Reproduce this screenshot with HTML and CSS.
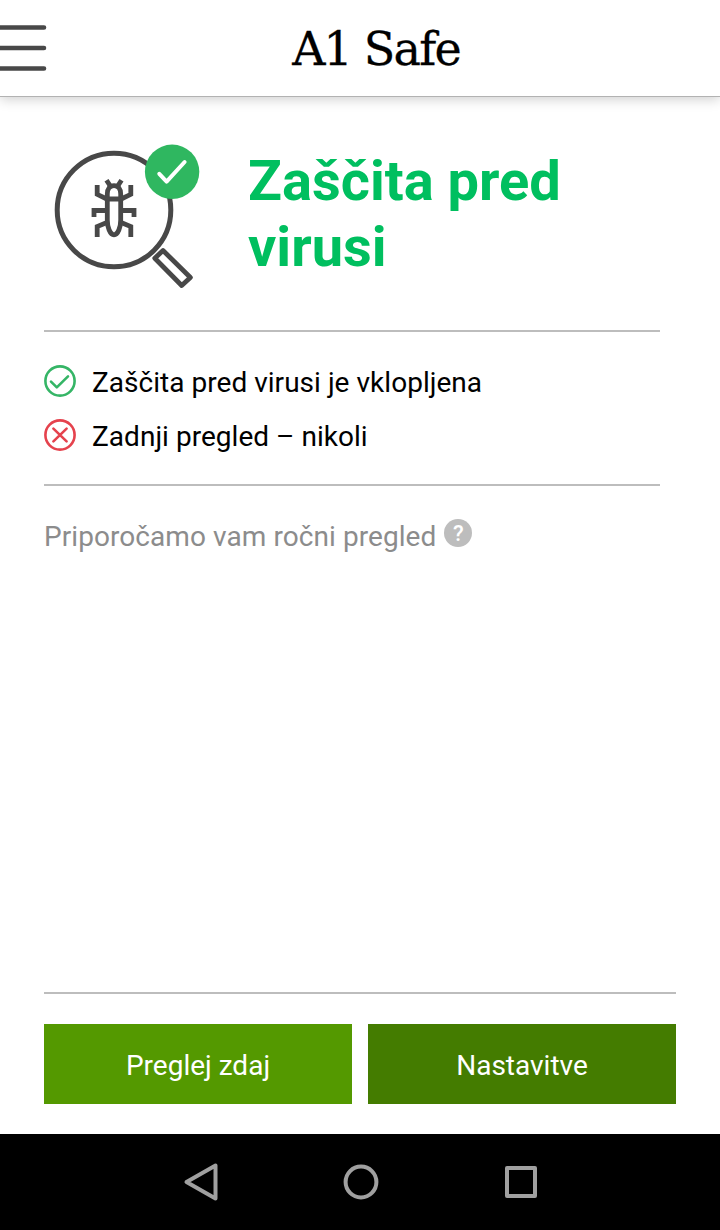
FILE: index.html
```
<!DOCTYPE html>
<html lang="sl">
<head>
    <meta charset="UTF-8">
    <meta name="viewport" content="width=device-width, initial-scale=1">

    <title>A1 Safe</title>

    <link rel="stylesheet" href="styles.css">
</head>
    <body>
        <header class="topbar">
            <svg class="menu" width="48" height="96" viewBox="0 0 48 96">
                <path d="M-4 27.5H44M-4 48H44M-4 68.5H44" />
            </svg>
            <h1 class="topbar-title">A1 Safe</h1>
        </header>

        <main class="content">
            <section class="hero">
                <svg class="hero-icon" width="166" height="170" viewBox="4 0 166 170">
                    <circle class="line" cx="74" cy="80" r="56.8" />
                    <path class="line line--handle" d="M123 120.5L114.8 128.2L141.7 155.5L150.4 147.5Z" />

                    <!-- bug -->
                    <path class="line line--bug" d="M67.3 67.5V64C67.3 58.5 70 55.6 74 55.6S80.7 58.5 80.7 64V67.5M66.5 69H81.5M67.3 69V90C67.3 97 70 104.8 74 104.8S80.7 97 80.7 90V69" />
                    <path class="line line--bug" d="M66.5 50.2L70.3 56M81.5 50.2L77.7 56" />
                    <path class="line line--bug" d="M57.2 55V64.3L66.8 69M90.8 55V64.3L81.2 69" />
                    <path class="line line--bug" d="M54 87V80.5H66.5M94 87V80.5H81.5" />
                    <path class="line line--bug" d="M57.2 107V96.5L67.5 92.3M90.8 107V96.5L80.5 92.3" />

                    <circle class="badge" cx="132.1" cy="41.8" r="27.2" />
                    <path class="badge-tick" d="M119.3 43.8L126.6 51.6L144.6 32" />
                </svg>
                <h2 class="hero-title">Zaščita pred virusi</h2>
            </section>

            <ul class="status">
                <li class="status-row">
                    <svg class="status-icon status-icon--ok" width="32" height="32" viewBox="0 0 32 32">
                        <circle cx="16" cy="16" r="14.6" />
                        <path d="M7 16.6L12.8 22.4L24 11.4" />
                    </svg>
                    <span>Zaščita pred virusi je vklopljena</span>
                </li>
                <li class="status-row">
                    <svg class="status-icon status-icon--fail" width="32" height="32" viewBox="0 0 32 32">
                        <circle cx="16" cy="16" r="14.6" />
                        <path d="M9.4 9.6L22.6 22.4M22.6 9.6L9.4 22.4" />
                    </svg>
                    <span>Zadnji pregled – nikoli</span>
                </li>
            </ul>

            <div class="hint">
                <span class="hint-text">Priporočamo vam ročni pregled</span>
                <span class="help">?</span>
            </div>

            <div class="actions">
                <button class="btn">Preglej zdaj</button>
                <button class="btn btn--dark">Nastavitve</button>
            </div>
        </main>

        <nav class="navbar">
            <svg width="40" height="40" viewBox="0 0 40 40"><path d="M5.5 20L34.5 3.5V36.5Z" /></svg>
            <svg width="40" height="40" viewBox="0 0 40 40"><circle cx="20" cy="20" r="15.4" /></svg>
            <svg width="40" height="40" viewBox="0 0 40 40"><rect x="6" y="6" width="28" height="28" /></svg>
        </nav>
    </body>
</html>
```
FILE: styles.css
```
* {
    box-sizing: border-box;
}

body {
    margin: 0;
    height: 1230px;
    display: flex;
    flex-direction: column;
    background: #fff;
    color: #000;
    font-family: Roboto, "Liberation Sans", sans-serif;
    font-size: 28px;
}

svg {
    display: block;
    flex: none;
    fill: none;
}

/* Top bar */
.topbar {
    display: flex;
    height: 97px;
    padding-right: 16px;
    border-bottom: 1px solid #b2b2b2;
    box-shadow: 0 2px 12px rgba(0, 0, 0, 0.2);
}

.menu {
    stroke: #484848;
    stroke-width: 4.6;
    stroke-linecap: round;
}

.topbar-title {
    flex: 1;
    margin: 0;
    font-family: "DejaVu Serif", serif;
    font-size: 46px;
    font-weight: 400;
    line-height: 98px;
    letter-spacing: -1.8px;
    text-align: center;
    -webkit-text-stroke: 0.3px #000;
}

/* Content */
.content {
    flex: 1;
    display: flex;
    flex-direction: column;
    padding: 33px 44px 30px;
}

.hero {
    display: flex;
    gap: 38px;
    height: 202px;
    margin-right: 16px;
    border-bottom: 2px solid #bdbdbd;
}

.line {
    stroke: #484848;
    stroke-width: 5;
}

.line--handle {
    stroke-width: 4.8;
    stroke-linejoin: round;
}

.line--bug {
    stroke-width: 4.8;
}

.badge {
    fill: #2fb760;
}

.badge-tick {
    stroke: #fff;
    stroke-width: 4;
    stroke-linecap: round;
    stroke-linejoin: round;
}

.hero-title {
    margin: 18px 0 0;
    color: #00bf5f;
    font-size: 56px;
    font-weight: 700;
    line-height: 66px;
}

.status {
    display: flex;
    flex-direction: column;
    gap: 22px;
    height: 154px;
    margin: 0 16px 0 0;
    padding: 33px 0 0;
    border-bottom: 2px solid #bdbdbd;
    list-style: none;
}

.status-row {
    display: flex;
    gap: 16px;
    line-height: 36px;
    letter-spacing: 0.03px;
    height: 32px;
}

.status-icon {
    stroke-width: 2.6;
    stroke-linecap: round;
    stroke-linejoin: round;
}

.status-icon--ok {
    stroke: #35b566;
}

.status-icon--fail {
    stroke: #e5424d;
}

.hint {
    display: flex;
    gap: 8px;
    padding-top: 33px;
    color: #8c8c8c;
    line-height: 36px;
}

.hint-text {
    letter-spacing: 0.07px;
}

.help {
    width: 28px;
    height: 28px;
    border-radius: 50%;
    background: #bdbdbd;
    color: #fff;
    font-size: 22px;
    font-weight: 500;
    line-height: 29px;
    text-align: center;
}

.actions {
    display: flex;
    gap: 16px;
    margin-top: auto;
    padding-top: 30px;
    border-top: 2px solid #bdbdbd;
}

.btn {
    flex: 1;
    height: 80px;
    padding: 2px 0 0;
    border: none;
    background: #549900;
    color: #fff;
    font: inherit;
}

.btn--dark {
    background: #447c00;
}

/* System navigation */
.navbar {
    display: flex;
    justify-content: center;
    align-items: center;
    gap: 120px;
    height: 96px;
    padding-left: 2px;
    background: #000;
    stroke: #a0a0a0;
    stroke-width: 4;
    stroke-linejoin: round;
}
```
